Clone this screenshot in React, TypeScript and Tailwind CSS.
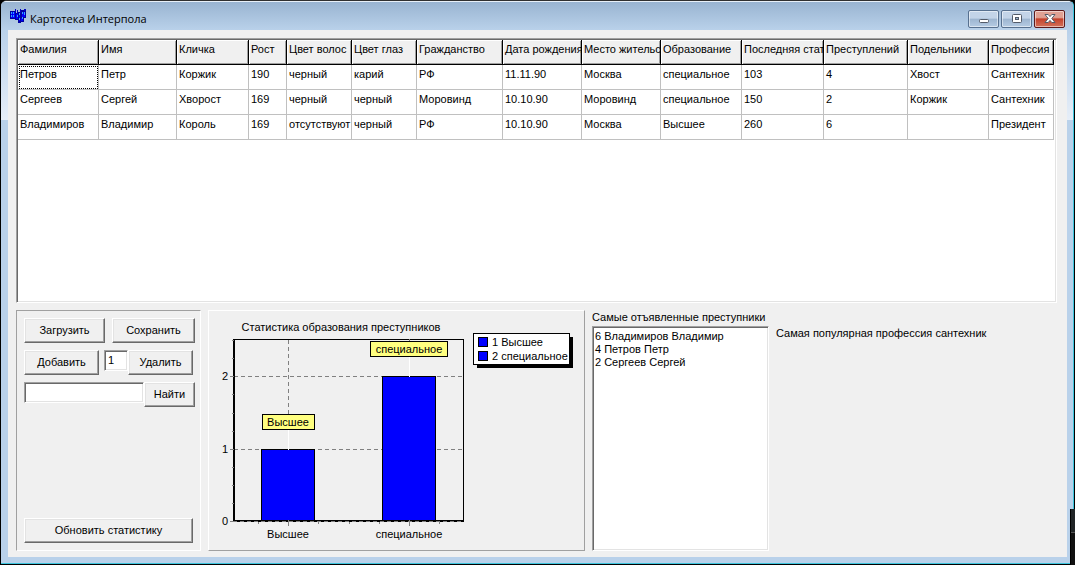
import type { ButtonHTMLAttributes } from 'react';

const columns = [
  { title: 'Фамилия', width: 81 },
  { title: 'Имя', width: 78 },
  { title: 'Кличка', width: 72 },
  { title: 'Рост', width: 38 },
  { title: 'Цвет волос', width: 65 },
  { title: 'Цвет глаз', width: 65 },
  { title: 'Гражданство', width: 86 },
  { title: 'Дата рождения', width: 79 },
  { title: 'Место жительства', width: 79 },
  { title: 'Образование', width: 81 },
  { title: 'Последняя статья', width: 82 },
  { title: 'Преступлений', width: 84 },
  { title: 'Подельники', width: 81 },
  { title: 'Профессия', width: 65 },
];

const criminals = [
  ['Петров', 'Петр', 'Коржик', '190', 'черный', 'карий', 'РФ', '11.11.90', 'Москва', 'специальное', '103', '4', 'Хвост', 'Сантехник'],
  ['Сергеев', 'Сергей', 'Хворост', '169', 'черный', 'черный', 'Моровинд', '10.10.90', 'Моровинд', 'специальное', '150', '2', 'Коржик', 'Сантехник'],
  ['Владимиров', 'Владимир', 'Король', '169', 'отсутствуют', 'черный', 'РФ', '10.10.90', 'Москва', 'Высшее', '260', '6', '', 'Президент'],
];

const mostWanted = ['6 Владимиров Владимир', '4 Петров Петр', '2 Сергеев Сергей'];

const sunken =
  'border border-t-[#a0a0a0] border-l-[#a0a0a0] border-r-white border-b-white bg-white shadow-[inset_1px_1px_#696969,inset_-1px_-1px_#e3e3e3]';

const PushButton = ({ className = '', ...props }: ButtonHTMLAttributes<HTMLButtonElement>) => (
  <button
    type="button"
    className={`h-[25px] shrink-0 border border-t-white border-l-white border-r-[#696969] border-b-[#696969] bg-[#f0f0f0] text-center shadow-[inset_-1px_-1px_#a0a0a0,inset_1px_1px_#e3e3e3] ${className}`}
    {...props}
  />
);

const AppIcon = () => (
  <svg width="17" height="14" viewBox="0 0 17 14" shapeRendering="crispEdges" aria-hidden="true">
    <path d="M0 2h6v8H0zM5 4h4v7H5zM8 3h3v11H8zM11 1h5v8h-5zM10 8h4v5h-4z" fill="#0000a0" />
    <path d="M1 3h4v6H1zM6 5h2v5H6zM9 5h1v7H9zM12 3h3v5h-3zM11 9h2v3h-2z" fill="#0000ff" />
    <path d="M5 0h1v3H5zM7 1h1v4H7zM10 0h1v4h-1zM14 0h2v2h-2z" fill="#0000c0" />
    <path d="M1 3h1v2H1zM3 3h1v2H3zM1 6h1v2H1zM3 6h1v2H3zM7 6h1v2H7zM9 4h1v2H9zM12 3h1v2h-1zM14 3h1v3h-1zM9 9h1v2H9zM12 8h1v2h-1z" fill="#30a8ff" />
  </svg>
);

const captionButton =
  'flex h-[18px] w-[31px] items-center justify-center rounded-[2px] border shadow-[inset_0_0_0_1px_rgba(255,255,255,0.5)]';
const captionBlue = 'border-[#57708f] bg-linear-to-b from-[#c3d4e8] from-45% via-[#9db5d0] via-50% to-[#b5cbe3]';

const TitleBar = () => (
  <header className="flex h-7 items-center bg-linear-to-b from-[#99b4d1] to-[#b9d1ea] pr-2 pl-[9px]">
    <AppIcon />
    <h1 className="ml-[3px] flex-1 pt-1.5 font-['Open_Sans','Noto_Sans',sans-serif] text-[11px] leading-4">Картотека Интерпола</h1>
    <div className="flex gap-0.5 pt-[5px]">
      <button type="button" aria-label="Свернуть" className={`${captionButton} ${captionBlue}`}>
        <svg width="12" height="12" viewBox="0 0 12 12" aria-hidden="true">
          <rect x="1.5" y="6.5" width="9" height="3" rx="1" fill="#fff" stroke="#535b69" />
        </svg>
      </button>
      <button type="button" aria-label="Развернуть" className={`${captionButton} ${captionBlue}`}>
        <svg width="12" height="12" viewBox="0 0 12 12" aria-hidden="true">
          <rect x="1.5" y="1.5" width="9" height="8" rx="1" fill="#fff" stroke="#535b69" />
          <rect x="4.5" y="4.5" width="3" height="2" fill="#9db5d0" stroke="#535b69" />
        </svg>
      </button>
      <button
        type="button"
        aria-label="Закрыть"
        className={`${captionButton} border-[#5c1a1c] bg-linear-to-b from-[#e0a193] from-40% via-[#c4412b] via-50% to-[#d2705a]`}
      >
        <svg width="12" height="12" viewBox="0 0 12 12" aria-hidden="true">
          <path d="M1 1.5h3.2L6 3.6l1.8-2.1H11L7.8 5.5 11 9.5H7.8L6 7.4 4.2 9.5H1l3.2-4z" fill="#fff" stroke="#535b69" />
        </svg>
      </button>
    </div>
  </header>
);

const CriminalsGrid = () => (
  <div className={`flex-1 overflow-hidden p-px ${sunken}`}>
    <table className="w-[1036px] table-fixed border-separate border-spacing-0">
      <colgroup>
        {columns.map((c) => (
          <col key={c.title} style={{ width: c.width }} />
        ))}
      </colgroup>
      <thead>
        <tr>
          {columns.map((c) => (
            <th
              key={c.title}
              className="h-[25px] overflow-hidden border-r border-b border-black bg-[#f0f0f0] pt-[3px] pl-0.5 text-left align-top font-normal whitespace-nowrap shadow-[inset_1px_1px_#fff,inset_-1px_-1px_#a0a0a0]"
            >
              {c.title}
            </th>
          ))}
        </tr>
      </thead>
      <tbody>
        {criminals.map((row, r) => (
          <tr key={row[0]}>
            {row.map((value, c) => (
              <td
                key={c}
                className={`h-[25px] overflow-hidden border-r border-b border-[#c0c0c0] pt-[3px] pl-0.5 align-top whitespace-nowrap ${
                  r === 0 && c === 0 ? 'outline-1 -outline-offset-2 outline-dotted outline-black' : ''
                }`}
              >
                {value}
              </td>
            ))}
          </tr>
        ))}
      </tbody>
    </table>
  </div>
);

const Controls = () => (
  <section className="flex w-[185px] flex-col gap-[7px] border border-t-[#a0a0a0] border-l-[#a0a0a0] border-r-white border-b-white py-[7px] pr-[5px] pl-[7px]">
    <div className="flex gap-[7px]">
      <PushButton className="w-[81px]">Загрузить</PushButton>
      <PushButton className="w-[83px]">Сохранить</PushButton>
    </div>
    <div className="flex items-start">
      <PushButton className="mr-[5px] w-[75px]">Добавить</PushButton>
      <input aria-label="Номер записи" defaultValue="1" className={`h-[21px] w-6 px-[3px] pb-0.5 outline-none ${sunken}`} />
      <PushButton className="w-[65px]">Удалить</PushButton>
    </div>
    <div className="flex items-start">
      <input aria-label="Поиск" className={`h-[21px] w-[120px] px-[3px] outline-none ${sunken}`} />
      <PushButton className="w-[51px]">Найти</PushButton>
    </div>
    <PushButton className="mt-auto w-[169px]">Обновить статистику</PushButton>
  </section>
);

const bars = [
  { label: 'Высшее', top: 138, x: 52, center: 79, markX: 53, markY: 103, markW: 53 },
  { label: 'специальное', top: 65, x: 173, center: 200, markX: 161, markY: 30, markW: 78 },
];

const minorY = [29, 47, 83, 102, 120, 156, 174, 192];
const minorX = [49, 109, 140, 170, 230];

const EducationChart = () => (
  <section className="w-[377px] border border-t-white border-l-white border-r-[#a0a0a0] border-b-[#a0a0a0]">
    <svg width="375" height="239" viewBox="0 0 375 239" shapeRendering="crispEdges" fontSize="11" role="img" aria-label="Статистика образования преступников">
      <text x="132" y="20" textAnchor="middle">Статистика образования преступников</text>

      {/* grid */}
      <g stroke="#808080" strokeDasharray="4 3">
        <path d="M25 65.5H254M25 138.5H254M79.5 29V103" />
      </g>
      <path d="M24 28.5H254.5V210" fill="none" stroke="#000" />
      <path d="M25 28V211M24 210H255" stroke="#000" strokeWidth="2" />

      {bars.map((b) => (
        <g key={b.label}>
          <rect x={b.x + 0.5} y={b.top + 0.5} width="53" height={209 - b.top} fill="#0000ff" stroke="#000" />
          <path d={`M${b.center + 0.5} ${b.markY + 16}V${b.top + 1}`} stroke="#fff" />
          <rect x={b.markX + 0.5} y={b.markY + 0.5} width={b.markW - 1} height="15" fill="#ffff80" stroke="#000" />
          <text x={b.center} y={b.markY + 12} textAnchor="middle">{b.label}</text>
          <text x={b.center} y="227" textAnchor="middle">{b.label}</text>
          <path d={`M${b.center + 0.5} 209V215`} stroke="#808080" />
        </g>
      ))}

      {/* axis ticks */}
      <path d="M24 210.5H254" stroke="#808080" strokeDasharray="4 3" />
      <path d="M21 65.5H25M21 138.5H25M21 210.5H25M200.5 28V30" stroke="#808080" />
      {minorY.map((y) => (
        <path key={y} d={`M23 ${y + 0.5}H25`} stroke="#808080" />
      ))}
      {minorX.map((x) => (
        <path key={x} d={`M${x + 0.5} 211V213`} stroke="#808080" />
      ))}
      <text x="19" y="69" textAnchor="end">2</text>
      <text x="19" y="142" textAnchor="end">1</text>
      <text x="19" y="214" textAnchor="end">0</text>

      {/* legend */}
      <rect x="268" y="26" width="96" height="31" />
      <rect x="264.5" y="22.5" width="96" height="31" fill="#fff" stroke="#000" />
      <rect x="269.5" y="26.5" width="9" height="9" fill="#0000ff" stroke="#000" />
      <rect x="269.5" y="40.5" width="9" height="9" fill="#0000ff" stroke="#000" />
      <text x="283" y="35">1 Высшее</text>
      <text x="283" y="49">2 специальное</text>
    </svg>
  </section>
);

const rail = 'bg-[#b9d1ea] bg-linear-to-b from-[#b9d1ea] to-[#e6eef8] bg-size-[100%_90px] bg-no-repeat';

const App = () => (
  <div className="relative flex min-h-screen flex-col overflow-hidden bg-black p-px pt-0 font-['Liberation_Sans',Arial,sans-serif] text-[11px] leading-[13px] text-black">
    <div className="flex flex-1 flex-col overflow-hidden rounded-t-[6px] border-t border-r border-b border-t-[#303030] border-r-[#3cc5dd] border-b-[#3cc5dd] bg-[#b9d1ea]">
      <div className="h-px bg-[#e8f0f8]" />
      <TitleBar />
      <div className="flex flex-1 pb-1.5">
        <div className={`w-[7px] ${rail}`} />
        <main className="flex min-w-0 flex-1 flex-col gap-[7px] bg-[#f0f0f0] pt-2 pr-2.5 pb-1.5 pl-2">
          <CriminalsGrid />
          <div className="flex h-[241px] gap-[7px]">
            <Controls />
            <EducationChart />
            <section className="flex w-[177px] flex-col gap-0.5 pt-px">
              <h2 id="wanted" className="whitespace-nowrap">Самые отъявленные преступники</h2>
              <ul aria-labelledby="wanted" className={`flex-1 px-0.5 py-[3px] ${sunken}`}>
                {mostWanted.map((name) => (
                  <li key={name}>{name}</li>
                ))}
              </ul>
            </section>
            <p className="pt-[17px]">Самая популярная профессия сантехник</p>
          </div>
        </main>
        <div className={`w-1.5 ${rail}`} />
      </div>
    </div>
    {/* edge of the window behind */}
    <div className="absolute right-0 bottom-0 flex h-14 w-[5px] flex-col border-l border-black bg-[#111]">
      <div className="h-6 border-b border-[#555] bg-[#202426]" />
    </div>
  </div>
);

export default App;
